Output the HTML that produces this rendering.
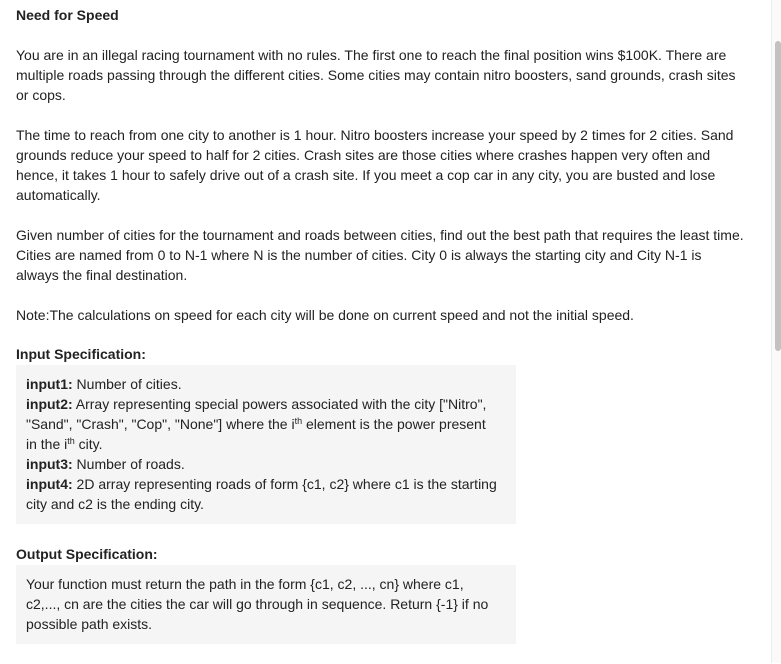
<!DOCTYPE html>
<html><head><style>
body{margin:0;background:#fff;font-family:"Liberation Sans",Arial,sans-serif;font-size:14px;line-height:20px;color:#222;width:781px;height:663px;overflow:hidden;position:relative}
.c{position:absolute;left:16px;top:5px;width:755px;white-space:nowrap}
p{margin:0}
.t{font-weight:bold;margin-bottom:20px}
.pp{margin-bottom:20px}
.h{font-weight:bold;margin-bottom:1px}
.box{background:#f5f5f5;width:480px;padding:9px 10px 10px 10px;margin-bottom:20px}
sup{font-size:9px;line-height:0;vertical-align:5px}
.sb{position:absolute;left:771px;top:0;width:10px;height:663px;background:#fafafa;border-left:1px solid #ececec}
.th{position:absolute;left:775px;top:41px;width:6px;height:310px;background:#c2c2c2;border-radius:3px}
</style></head><body>
<div class="c">
<p class="t">Need for Speed</p>
<p class="pp">You are in an illegal racing tournament with no rules. The first one to reach the final position wins $100K. There are<br>multiple roads passing through the different cities. Some cities may contain nitro boosters, sand grounds, crash sites<br>or cops.</p>
<p class="pp">The time to reach from one city to another is 1 hour. Nitro boosters increase your speed by 2 times for 2 cities. Sand<br>grounds reduce your speed to half for 2 cities. Crash sites are those cities where crashes happen very often and<br>hence, it takes 1 hour to safely drive out of a crash site. If you meet a cop car in any city, you are busted and lose<br>automatically.</p>
<p class="pp">Given number of cities for the tournament and roads between cities, find out the best path that requires the least time.<br>Cities are named from 0 to N-1 where N is the number of cities. City 0 is always the starting city and City N-1 is<br>always the final destination.</p>
<p class="pp" style="margin-bottom:19px">Note:The calculations on speed for each city will be done on current speed and not the initial speed.</p>
<p class="h">Input Specification:</p>
<div class="box"><b>input1:</b> Number of cities.<br><b>input2:</b> Array representing special powers associated with the city ["Nitro",<br>"Sand", "Crash", "Cop", "None"] where the i<sup>th</sup> element is the power present<br>in the i<sup>th</sup> city.<br><b>input3:</b> Number of roads.<br><b>input4:</b> 2D array representing roads of form {c1, c2} where c1 is the starting<br>city and c2 is the ending city.</div>
<p class="h">Output Specification:</p>
<div class="box">Your function must return the path in the form {c1, c2, ..., cn} where c1,<br>c2,..., cn are the cities the car will go through in sequence. Return {-1} if no<br>possible path exists.</div>
</div>
<div class="sb"></div><div class="th"></div>
</body></html>
